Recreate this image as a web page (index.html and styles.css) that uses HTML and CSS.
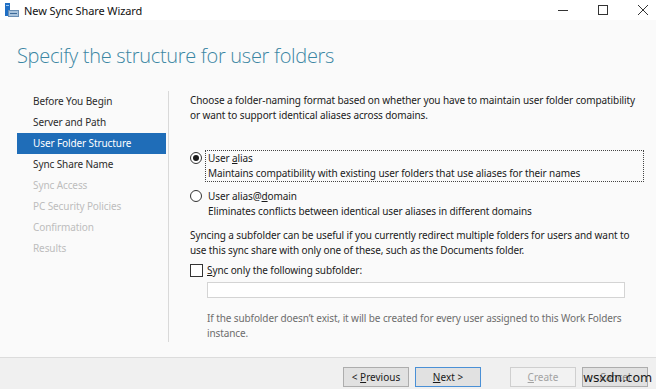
FILE: index.html
```html
<!DOCTYPE html>
<html>
<head>
<meta charset="utf-8">
<link rel="stylesheet" href="styles.css">
</head>
<body>
<div class="window">
  <div class="titlebar">
    <svg class="appicon" width="16" height="16" viewBox="0 0 16 16">
      <rect x="1" y="1" width="5" height="13" fill="#1f6fc5"/>
      <rect x="2" y="3" width="3" height="1" fill="#9cc8f0"/>
      <rect x="4" y="8" width="11" height="7" fill="#6a8fb5"/>
      <rect x="5" y="9" width="9" height="5" fill="#a9c3dc"/>
      <rect x="6" y="11" width="7" height="1" fill="#3d6a99"/>
    </svg>
    <span class="wintitle">New Sync Share Wizard</span>
    <div class="controls">
      <svg width="12" height="12" viewBox="0 0 12 12"><line x1="1" y1="6.5" x2="11" y2="6.5" stroke="#333" stroke-width="1"/></svg>
      <svg width="12" height="12" viewBox="0 0 12 12"><rect x="1.5" y="1.5" width="9" height="9" fill="none" stroke="#333" stroke-width="1"/></svg>
      <svg width="12" height="12" viewBox="0 0 12 12"><path d="M1 1 L11 11 M11 1 L1 11" stroke="#333" stroke-width="1"/></svg>
    </div>
  </div>
  <div class="main">
    <h1 class="heading">Specify the structure for user folders</h1>
    <div class="cols">
      <div class="sidebar">
        <div class="step">Before You Begin</div>
        <div class="step">Server and Path</div>
        <div class="step active">User Folder Structure</div>
        <div class="step">Sync Share Name</div>
        <div class="step disabled">Sync Access</div>
        <div class="step disabled">PC Security Policies</div>
        <div class="step disabled">Confirmation</div>
        <div class="step disabled">Results</div>
      </div>
      <div class="content">
        <p class="para">Choose a folder-naming format based on whether you have to maintain user folder compatibility or want to support identical aliases across domains.</p>
        <div class="option first">
          <span class="radio checked"></span>
          <div class="optext focus">
            <div>User <u>a</u>lias</div>
            <div>Maintains compatibility with existing user folders that use aliases for their names</div>
          </div>
        </div>
        <div class="option second">
          <span class="radio"></span>
          <div class="optext">
            <div>User alias@<u>d</u>omain</div>
            <div>Eliminates conflicts between identical user aliases in different domains</div>
          </div>
        </div>
        <p class="para para2">Syncing a subfolder can be useful if you currently redirect multiple folders for users and want to use this sync share with only one of these, such as the Documents folder.</p>
        <div class="checkrow">
          <span class="checkbox"></span>
          <span><u>S</u>ync only the following subfolder:</span>
        </div>
        <div class="inputbox"></div>
        <p class="note">If the subfolder doesn’t exist, it will be created for every user assigned to this Work Folders instance.</p>
      </div>
    </div>
  </div>
  <div class="footer">
    <button class="btn">&lt; <u>P</u>revious</button>
    <button class="btn default"><u>N</u>ext &gt;</button>
    <button class="btn disabledbtn create"><u>C</u>reate</button>
    <button class="btn cancel">Cancel<span class="watermark">wsxdn.com</span></button>
  </div>
</div>
</body>
</html>
```

FILE: styles.css
```css
* { box-sizing: border-box; }
html, body { margin: 0; padding: 0; }
body {
  width: 656px;
  height: 389px;
  overflow: hidden;
  font-family: "Noto Sans", "Open Sans", sans-serif;
  font-size: 10px;
  letter-spacing: -0.1px;
  color: #1a1a1a;
  background: #fff;
}
.window { width: 656px; height: 389px; display: flex; flex-direction: column; }
.titlebar {
  height: 20px;
  background: #fff;
  display: flex;
  align-items: center;
  padding-left: 4px;
}
.appicon { margin-right: 4px; }
.wintitle { font-size: 11px; color: #111; letter-spacing: -0.1px; }
.controls {
  margin-left: auto;
  display: flex;
  align-items: center;
  gap: 28px;
  padding-right: 7px;
}
.main {
  height: 337px;
  background: #fafafa;
  display: flex;
  flex-direction: column;
}
.heading {
  margin: 0;
  padding: 22px 0 0 17px;
  height: 71px;
  font-family: "Open Sans", "Noto Sans", sans-serif;
  font-weight: 300;
  font-size: 20px;
  letter-spacing: -0.3px;
  color: #3a86a3;
  line-height: 28px;
}
.cols { display: flex; flex: 1; }
.sidebar {
  margin-left: 17px;
  width: 152px;
  height: 251px;
  border-right: 1px solid #d9d9d9;
}
.step {
  height: 21px;
  line-height: 21px;
  padding-left: 16px;
  width: 149px;
  color: #2b2b2b;
}
.step.active { background: #1f6db8; color: #fff; }
.step.disabled { color: #bdbdbd; }
.content {
  padding: 2px 0 0 21px;
  width: 476px;
  line-height: 15px;
}
.para { margin: 0; }
.option { display: flex; align-items: flex-start; }
.option.first { margin-top: 27px; }
.option.second { margin-top: 7px; }
.radio {
  width: 12px; height: 12px;
  border: 1px solid #333;
  border-radius: 50%;
  margin-top: 1.5px;
  margin-right: 3px;
  background: #fff;
  flex: none;
  position: relative;
}
.radio.checked::after {
  content: "";
  position: absolute;
  left: 2px; top: 2px;
  width: 6px; height: 6px;
  border-radius: 50%;
  background: #1a1a1a;
}
.optext { padding-left: 2px; border: 1px solid transparent; margin-top: -0.5px; }
.optext.focus { border: 1px dotted #444; width: 439px; }
.para2 { margin-top: 8px; }
.checkrow { display: flex; align-items: center; margin-top: 5px; }
.checkbox {
  width: 13px; height: 13px;
  border: 1px solid #333;
  background: #fff;
  margin-right: 4px;
}
.inputbox {
  margin: 4px 0 0 17px;
  width: 418px;
  height: 16px;
  border: 1px solid #d4d4d4;
  background: #fff;
}
.note { margin: 13px 0 0 17px; color: #6d6d6d; width: 445px; }
.footer {
  height: 32px;
  border-top: 1px solid #dcdcdc;
  background: #f0f0f0;
  display: flex;
  align-items: flex-start;
  justify-content: flex-end;
  padding: 9px 8px 0 0;
}
.btn {
  width: 66px;
  height: 20px;
  font-family: "Noto Sans", "Open Sans", sans-serif;
  font-size: 10px;
  color: #1a1a1a;
  background: #e1e1e1;
  border: 1px solid #adadad;
  padding: 0;
  margin-left: 6px;
  line-height: 17px;
  position: relative;
}
.btn.default { border-color: #4a90d6; }
.btn.create { margin-left: 29px; }
.btn.disabledbtn { background: #f2f2f2; border-color: #cfcfcf; color: #a3a3a3; }
.btn.cancel { color: #8a8a8a; }
.watermark {
  position: absolute;
  left: 0;
  top: 1px;
  font-family: "DejaVu Sans", sans-serif;
  font-size: 12.5px;
  color: #1a1a1a;
  letter-spacing: -0.2px;
}
```
